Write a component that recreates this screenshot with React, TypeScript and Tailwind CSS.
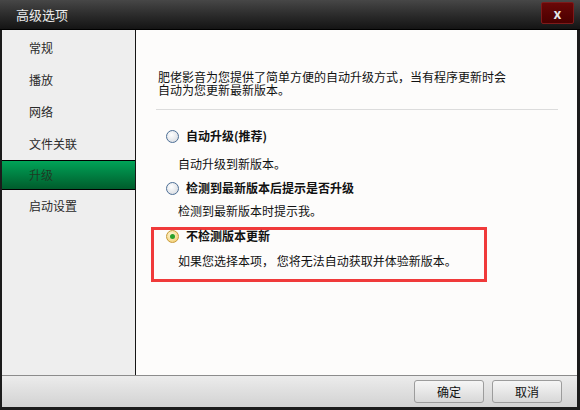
const font = "font-['SimSun','Noto_Sans_CJK_SC',sans-serif]";

const navItems = ['常规', '播放', '网络', '文件关联', '升级', '启动设置'];

function Radio({ checked }: { checked?: boolean }) {
  if (checked) {
    return (
      <span className="flex h-[13px] w-[13px] shrink-0 items-center justify-center rounded-full border border-[#c89a3a] bg-[radial-gradient(circle_at_40%_35%,#fff7d8,#f0c860)]">
        <span className="h-[5px] w-[5px] rounded-full bg-[#2aa02a]" />
      </span>
    );
  }
  return (
    <span className="h-[13px] w-[13px] shrink-0 rounded-full border border-[#4d6f96] bg-[radial-gradient(circle_at_40%_35%,#ffffff,#d2d6dc)]" />
  );
}

function OptionLabel({ checked, children }: { checked?: boolean; children: React.ReactNode }) {
  return (
    <div className="flex h-[12px] items-center gap-[7px]">
      <Radio checked={checked} />
      <span className="text-[12px] font-bold leading-[12px] text-[#111]">{children}</span>
    </div>
  );
}

export default function App() {
  return (
    <div className={`flex h-[410px] w-[580px] flex-col bg-[#1b1b1b] ${font}`}>
      {/* title bar */}
      <div className="flex h-[30px] shrink-0 items-center justify-between border-b border-black bg-gradient-to-b from-[#474747] to-[#141414] pl-[16px] pr-[6px]">
        <span className="text-[13px] text-[#ececec]">高级选项</span>
        <button className="mb-[3px] flex h-[22px] w-[33px] items-center justify-center rounded-[2px] border border-[#7e1a1a] bg-gradient-to-b from-[#6a0808] to-[#4a0000] text-[14px] font-bold text-[#e6e6e6]">
          x
        </button>
      </div>

      <div className="ml-[2px] mr-[3px] mb-[3px] flex flex-1 flex-col">
        <div className="flex flex-1">
          {/* sidebar */}
          <div className="w-[134px] shrink-0 border-r border-[#161616] bg-[#eeeeee] pt-[2px]">
            {navItems.map((item) =>
              item === '升级' ? (
                <div
                  key={item}
                  className="flex h-[30px] items-center border-y border-black bg-gradient-to-b from-[#00a458] to-[#005c2c] pl-[27px] text-[12px] text-[#1e3a24]"
                >
                  {item}
                </div>
              ) : (
                <div key={item} className="flex h-[32px] items-center pl-[27px] text-[12px] text-[#2a2a2a]">
                  {item}
                </div>
              ),
            )}
          </div>

          {/* content */}
          <div className="flex flex-1 flex-col items-start bg-[#fdfcfb] pl-[15px] pt-[40px]">
            <p className="ml-[7px] text-[12px] leading-[13px] text-[#111]">
              肥佬影音为您提供了简单方便的自动升级方式，当有程序更新时会
              <br />
              自动为您更新最新版本。
            </p>
            <div className="ml-[5px] mt-[13px] h-px w-[402px] bg-[#dcdcdc]" />

            <div className="ml-[15px] mt-[20px]">
              <OptionLabel>自动升级(推荐)</OptionLabel>
            </div>
            <p className="ml-[27px] mt-[15px] text-[12px] leading-[14px] text-[#111]">自动升级到新版本。</p>

            <div className="ml-[15px] mt-[11px]">
              <OptionLabel>检测到最新版本后提示是否升级</OptionLabel>
            </div>
            <p className="ml-[27px] mt-[10px] text-[12px] leading-[14px] text-[#111]">检测到最新版本时提示我。</p>

            <div className="mt-[9px] w-[336px] border-[3px] border-[#f03a3a] pb-[11px] pl-[12px]">
              <OptionLabel checked>不检测版本更新</OptionLabel>
              <div className="mt-[12px] flex">
                <span className="w-[12px] shrink-0" />
                <span className="text-[12px] leading-[14px] text-[#111]">
                  如果您选择本项， 您将无法自动获取并体验新版本。
                </span>
              </div>
            </div>
          </div>
        </div>

        {/* footer */}
        <div className="flex h-[32px] shrink-0 items-center justify-end gap-[8px] border-t border-[#8c8c8c] bg-gradient-to-b from-[#ececec] to-[#d2d2d2] pr-[15px]">
          <button className="h-[23px] w-[70px] rounded-[3px] border border-[#9c9c9c] bg-gradient-to-b from-[#f6f6f6] to-[#d8d8d8] text-[12px] text-[#111]">
            确定
          </button>
          <button className="h-[23px] w-[70px] rounded-[3px] border border-[#9c9c9c] bg-gradient-to-b from-[#f6f6f6] to-[#d8d8d8] text-[12px] text-[#111]">
            取消
          </button>
        </div>
      </div>
    </div>
  );
}
